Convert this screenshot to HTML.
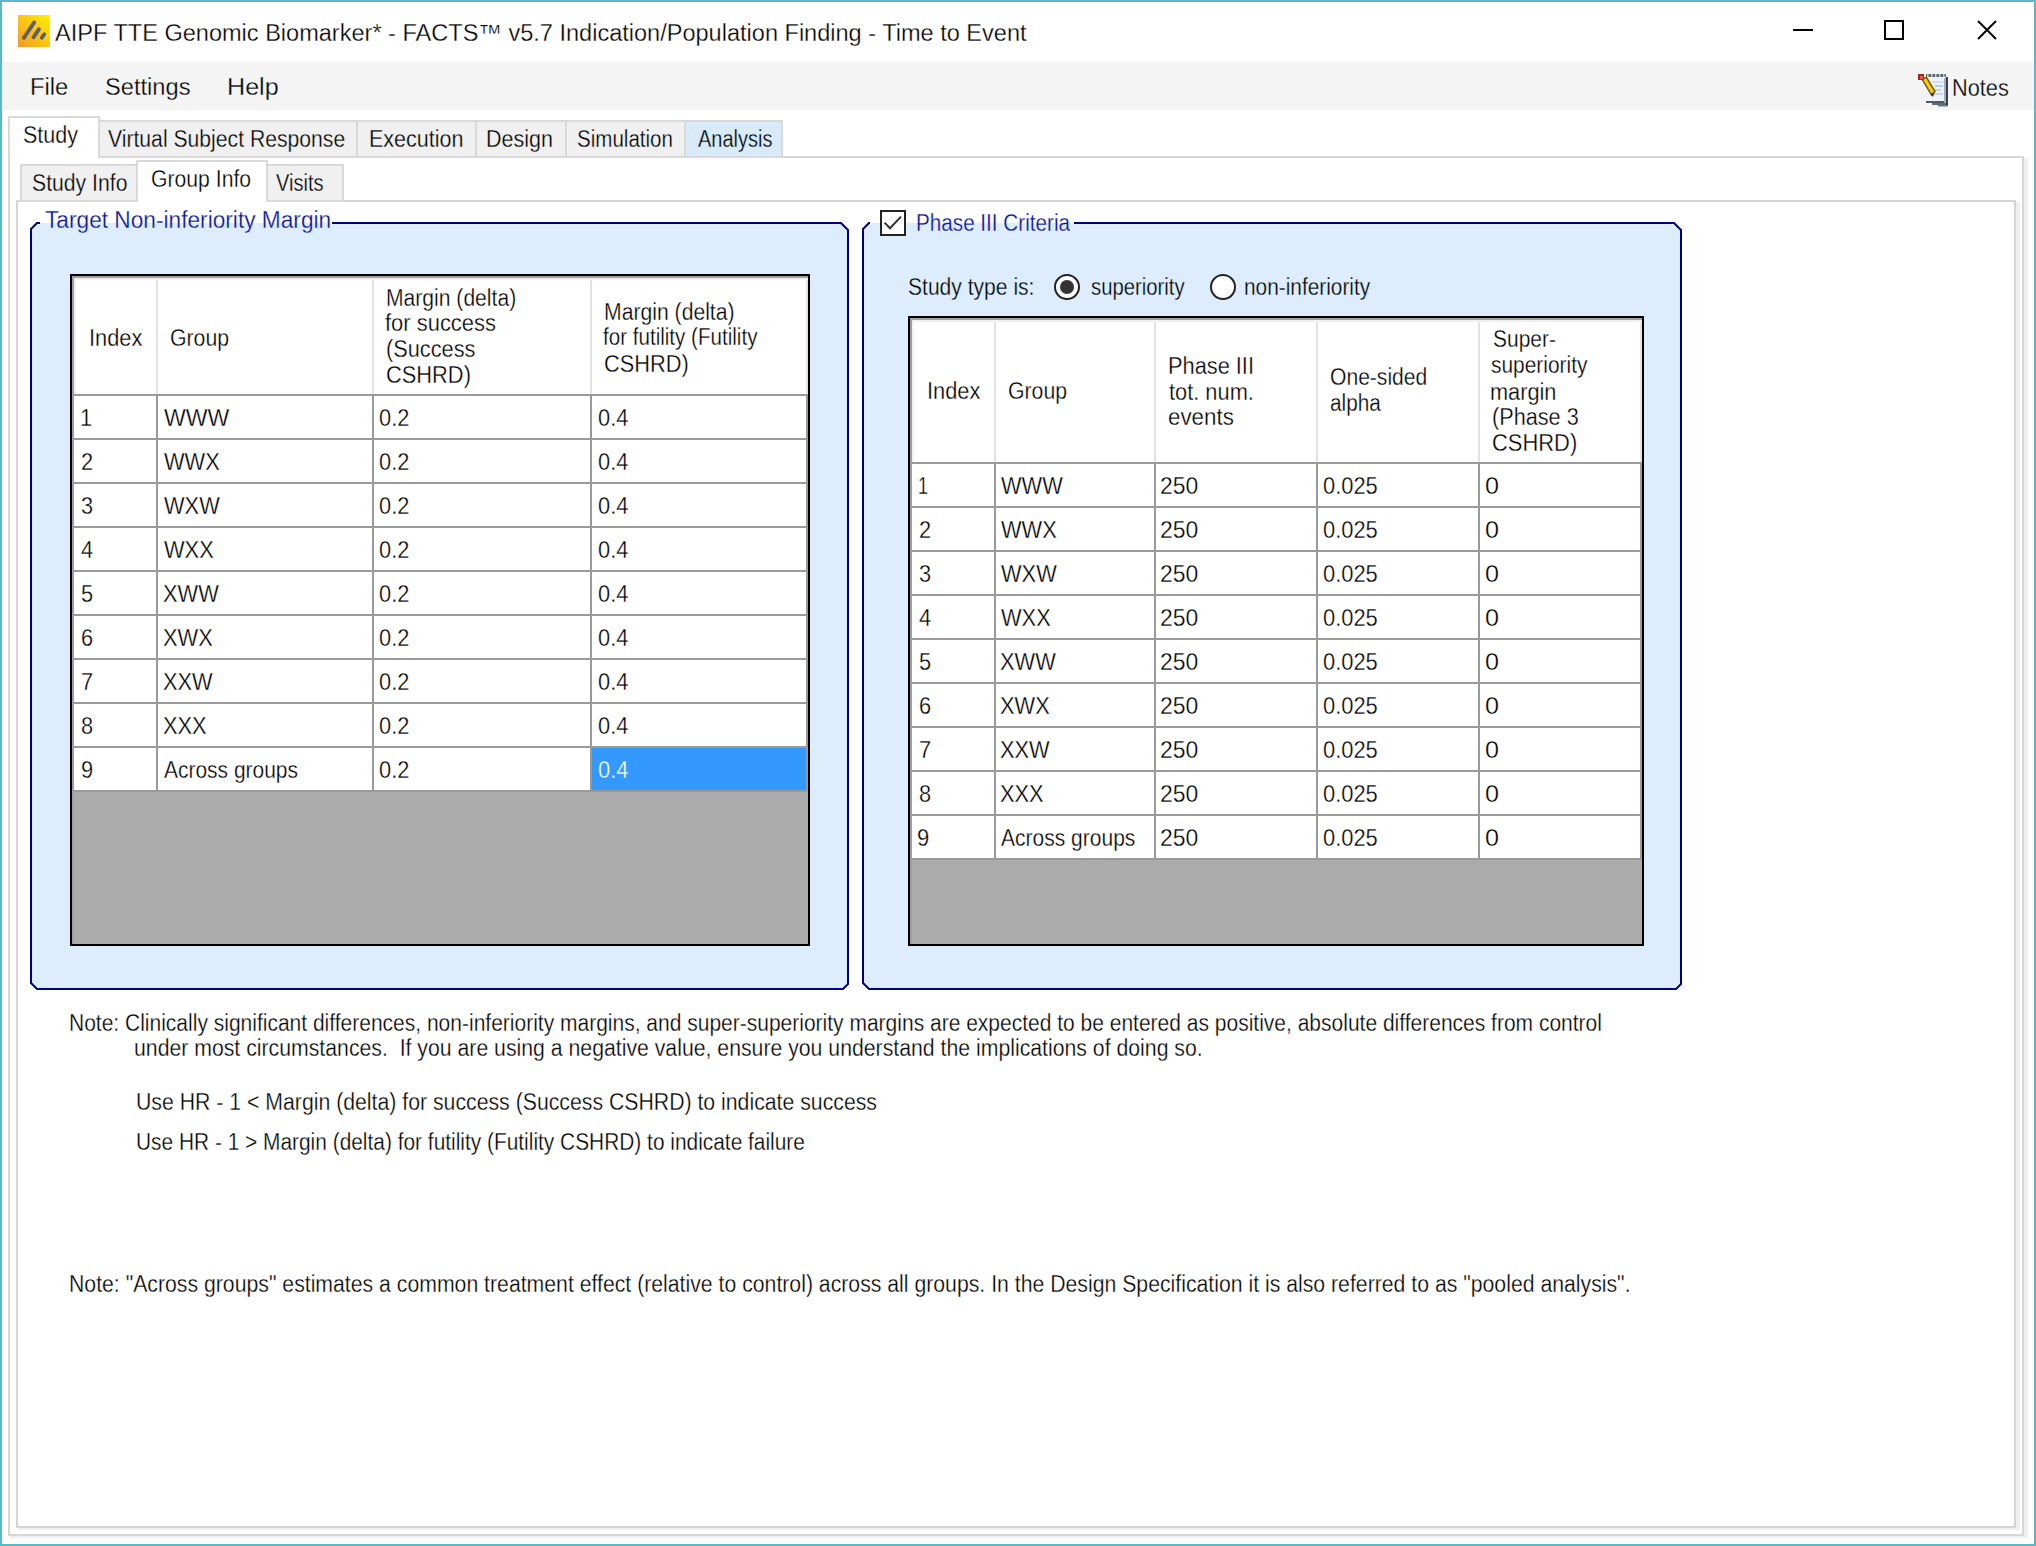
<!DOCTYPE html><html><head><meta charset="utf-8"><style>
html,body{margin:0;padding:0;}body{width:2036px;height:1546px;position:relative;overflow:hidden;background:#fff;font-family:"Liberation Sans",sans-serif;}
div{position:absolute;box-sizing:border-box;}
.t{height:0;white-space:pre;line-height:0;transform-origin:0 0;}
.t span{display:inline-block;line-height:0;}
</style></head><body>
<div style="left:0px;top:0px;width:2036px;height:2px;background:#5ab9c9;"></div>
<div style="left:0px;top:1544px;width:2036px;height:2px;background:#5ab9c9;"></div>
<div style="left:0px;top:0px;width:2px;height:1546px;background:#5ab9c9;"></div>
<div style="left:2034px;top:0px;width:2px;height:1546px;background:#5ab9c9;"></div>
<div style="left:18px;top:15px;width:32px;height:32px;background:linear-gradient(45deg,#f39a1e 0%,#fbc515 50%,#fff200 100%);"></div>
<svg style="position:absolute;left:18px;top:15px" width="32" height="32" viewBox="0 0 32 32"><g stroke="#5f5f5f" stroke-width="3.8" stroke-linecap="round" fill="none"><line x1="5.8" y1="23" x2="16.2" y2="7.4"/><line x1="15.4" y1="22.3" x2="21" y2="14.2"/><line x1="23.7" y1="22.8" x2="26.3" y2="19.2"/></g></svg>
<div class="t" style="left:55.00px;top:32.65px;font-size:23.5px;color:#000;-webkit-text-stroke:0.3px #fff;transform:scaleX(1.0016)"><span>AIPF TTE Genomic Biomarker* - FACTS™ v5.7 Indication/Population Finding - Time to Event</span></div>
<div style="left:1793px;top:29px;width:20px;height:2px;background:#000;"></div>
<div style="left:1884px;top:20px;width:20px;height:20px;border:2px solid #000;"></div>
<svg style="position:absolute;left:1975px;top:18px" width="24" height="24" viewBox="0 0 24 24"><path d="M3 3 L21 21 M21 3 L3 21" stroke="#000" stroke-width="2" fill="none"/></svg>
<div style="left:2px;top:62px;width:2032px;height:48px;background:#f4f4f4;"></div>
<div class="t" style="left:30.38px;top:87.45px;font-size:23.5px;color:#000;-webkit-text-stroke:0.3px #f4f4f4;transform:scaleX(1.0114)"><span>File</span></div>
<div class="t" style="left:104.99px;top:87.45px;font-size:23.5px;color:#000;-webkit-text-stroke:0.3px #f4f4f4;transform:scaleX(1.0072)"><span>Settings</span></div>
<div class="t" style="left:226.76px;top:87.45px;font-size:23.5px;color:#000;-webkit-text-stroke:0.3px #f4f4f4;transform:scaleX(1.0689)"><span>Help</span></div>
<svg style="position:absolute;left:1910px;top:68px" width="45" height="44" viewBox="0 0 45 44">
<rect x="16" y="8" width="20" height="27" fill="#eef3fa"/>
<rect x="22" y="13" width="12" height="2" fill="#d5e0ee"/>
<rect x="25" y="17" width="8" height="2" fill="#b9cbe0"/>
<rect x="23" y="21" width="8" height="2" fill="#c5d3e6"/>
<rect x="23" y="25" width="10" height="2" fill="#c5d3e6"/>
<rect x="16" y="6" width="20" height="3" fill="#5b6570"/>
<rect x="17" y="6" width="1.5" height="3" fill="#c8ccd0"/><rect x="21" y="6" width="1.5" height="3" fill="#c8ccd0"/><rect x="25" y="6" width="1.5" height="3" fill="#c8ccd0"/><rect x="29" y="6" width="1.5" height="3" fill="#c8ccd0"/><rect x="33" y="6" width="1.5" height="3" fill="#c8ccd0"/>
<rect x="34" y="10" width="2" height="26" fill="#a3adb7"/>
<rect x="36" y="9" width="2" height="29" fill="#34404b"/>
<rect x="16" y="33" width="18" height="2" fill="#4f5d6b"/>
<rect x="22" y="35" width="14" height="2" fill="#5d6a76"/>
<rect x="28" y="37" width="10" height="1.5" fill="#6b7682"/>
<path d="M12 11 L16.5 9.5 L25 23.5 L21.5 27 Z" fill="#f3cf10" stroke="#7a5a08" stroke-width="1.5"/>
<rect x="8" y="6" width="6" height="6" fill="#a8251c"/><rect x="10" y="8" width="3" height="3" fill="#f0584a"/>
<path d="M21 26 L24.5 24 L23 29 Z" fill="#2a2a2a"/>
</svg>
<div class="t" style="left:1952.15px;top:87.55px;font-size:23.5px;color:#000;-webkit-text-stroke:0.3px #f4f4f4;transform:scaleX(0.9254)"><span>Notes</span></div>
<div style="left:8px;top:156px;width:2016px;height:2px;background:#d6d6d6;"></div>
<div style="left:8px;top:156px;width:2px;height:1380px;background:#d6d6d6;"></div>
<div style="left:2022px;top:156px;width:2px;height:1380px;background:#d6d6d6;"></div>
<div style="left:2024px;top:158px;width:4px;height:1380px;background:#efefef;"></div>
<div style="left:8px;top:1534px;width:2016px;height:2px;background:#d6d6d6;"></div>
<div style="left:10px;top:1536px;width:2018px;height:2px;background:#efefef;"></div>
<div style="left:98px;top:120px;width:260px;height:38px;background:#f0f0f0;border:2px solid #d9d9d9;"></div>
<div style="left:356px;top:120px;width:121px;height:38px;background:#f0f0f0;border:2px solid #d9d9d9;"></div>
<div style="left:475px;top:120px;width:92px;height:38px;background:#f0f0f0;border:2px solid #d9d9d9;"></div>
<div style="left:565px;top:120px;width:121px;height:38px;background:#f0f0f0;border:2px solid #d9d9d9;"></div>
<div style="left:684px;top:120px;width:99px;height:38px;background:#d9eaf9;border:2px solid #d9d9d9;"></div>
<div style="left:8px;top:116px;width:92px;height:42px;background:#fff;border:2px solid #d9d9d9;border-bottom:none;"></div>
<div class="t" style="left:23.08px;top:135.05px;font-size:23.5px;color:#000;-webkit-text-stroke:0.3px #fff;transform:scaleX(0.9153)"><span>Study</span></div>
<div class="t" style="left:108.00px;top:139.05px;font-size:23.5px;color:#000;-webkit-text-stroke:0.3px #f0f0f0;transform:scaleX(0.9004)"><span>Virtual Subject Response</span></div>
<div class="t" style="left:368.57px;top:139.05px;font-size:23.5px;color:#000;-webkit-text-stroke:0.3px #f0f0f0;transform:scaleX(0.9160)"><span>Execution</span></div>
<div class="t" style="left:486.17px;top:139.05px;font-size:23.5px;color:#000;-webkit-text-stroke:0.3px #f0f0f0;transform:scaleX(0.9143)"><span>Design</span></div>
<div class="t" style="left:577.13px;top:139.05px;font-size:23.5px;color:#000;-webkit-text-stroke:0.3px #f0f0f0;transform:scaleX(0.8748)"><span>Simulation</span></div>
<div class="t" style="left:698.00px;top:139.05px;font-size:23.5px;color:#000;-webkit-text-stroke:0.3px #d9eaf9;transform:scaleX(0.8506)"><span>Analysis</span></div>
<div style="left:16px;top:200px;width:2000px;height:2px;background:#d6d6d6;"></div>
<div style="left:16px;top:200px;width:2px;height:1328px;background:#d6d6d6;"></div>
<div style="left:2014px;top:200px;width:2px;height:1328px;background:#d6d6d6;"></div>
<div style="left:2016px;top:202px;width:4px;height:1328px;background:#efefef;"></div>
<div style="left:16px;top:1526px;width:2000px;height:2px;background:#d6d6d6;"></div>
<div style="left:18px;top:1528px;width:2002px;height:2px;background:#efefef;"></div>
<div style="left:20px;top:164px;width:118px;height:38px;background:#f0f0f0;border:2px solid #d9d9d9;"></div>
<div style="left:266px;top:164px;width:78px;height:38px;background:#f0f0f0;border:2px solid #d9d9d9;"></div>
<div style="left:136px;top:160px;width:132px;height:42px;background:#fff;border:2px solid #d9d9d9;border-bottom:none;"></div>
<div class="t" style="left:31.50px;top:183.25px;font-size:23.5px;color:#000;-webkit-text-stroke:0.3px #f0f0f0;transform:scaleX(0.9019)"><span>Study Info</span></div>
<div class="t" style="left:151.10px;top:179.15px;font-size:23.5px;color:#000;-webkit-text-stroke:0.3px #fff;transform:scaleX(0.9018)"><span>Group Info</span></div>
<div class="t" style="left:275.70px;top:183.05px;font-size:23.5px;color:#000;-webkit-text-stroke:0.3px #f0f0f0;transform:scaleX(0.8527)"><span>Visits</span></div>
<svg style="position:absolute;left:30px;top:222px" width="819" height="768" viewBox="0 0 819 768"><path d="M1,7 L7,1 L811,1 L818,8 L818,762 L813,767 L7,767 L1,761 Z" fill="#deedfd" stroke="#000080" stroke-width="2"/></svg>
<div style="left:40px;top:222px;width:292px;height:2px;background:linear-gradient(#fff 0 1px,#deedfd 1px);"></div>
<svg style="position:absolute;left:862px;top:222px" width="820" height="768" viewBox="0 0 820 768"><path d="M1,7 L7,1 L812,1 L819,8 L819,762 L814,767 L7,767 L1,761 Z" fill="#deedfd" stroke="#000080" stroke-width="2"/></svg>
<div style="left:870px;top:222px;width:204px;height:2px;background:linear-gradient(#fff 0 1px,#deedfd 1px);"></div>
<div class="t" style="left:45.23px;top:219.85px;font-size:23.5px;color:#0e0e96;-webkit-text-stroke:0.3px #deedfd;transform:scaleX(0.9653)"><span>Target Non-inferiority Margin</span></div>
<div style="left:880px;top:210px;width:26px;height:26px;background:#fff;border:2px solid #222;"></div>
<svg style="position:absolute;left:880px;top:210px" width="26" height="26" viewBox="0 0 26 26"><path d="M4.5 12.6 L10 18.3 L21 6.6" stroke="#333" stroke-width="2" fill="none"/></svg>
<div class="t" style="left:916.04px;top:223.25px;font-size:23.5px;color:#0e0e96;-webkit-text-stroke:0.3px #deedfd;transform:scaleX(0.8798)"><span>Phase III Criteria</span></div>
<div class="t" style="left:908.10px;top:286.85px;font-size:23.5px;color:#000;-webkit-text-stroke:0.3px #deedfd;transform:scaleX(0.8964)"><span>Study type is:</span></div>
<div style="left:1054px;top:274px;width:26px;height:26px;border-radius:50%;background:#fff;border:2px solid #222;"></div>
<div style="left:1060px;top:280px;width:14px;height:14px;border-radius:50%;background:#333;"></div>
<div class="t" style="left:1090.74px;top:286.85px;font-size:23.5px;color:#000;-webkit-text-stroke:0.3px #deedfd;transform:scaleX(0.8636)"><span>superiority</span></div>
<div style="left:1210px;top:274px;width:26px;height:26px;border-radius:50%;background:#fff;border:2px solid #222;"></div>
<div class="t" style="left:1244.13px;top:286.85px;font-size:23.5px;color:#000;-webkit-text-stroke:0.3px #deedfd;transform:scaleX(0.8864)"><span>non-inferiority</span></div>
<div style="left:70px;top:274px;width:740px;height:672px;background:#000;"></div>
<div style="left:72px;top:276px;width:736px;height:668px;background:#a0a0a0;"></div>
<div style="left:74px;top:278px;width:734px;height:666px;background:#f0f0f0;"></div>
<div style="left:72px;top:276px;width:736px;height:668px;background:#ababab;"></div>
<div style="left:72px;top:276px;width:736px;height:2px;background:#a0a0a0;"></div>
<div style="left:72px;top:276px;width:2px;height:668px;background:#a0a0a0;"></div>
<div style="left:74px;top:278px;width:734px;height:116px;background:#fff;"></div>
<div style="left:74px;top:278px;width:734px;height:2px;background:#f0f0f0;"></div>
<div style="left:74px;top:278px;width:2px;height:116px;background:#f0f0f0;"></div>
<div style="left:156px;top:280px;width:2px;height:114px;background:#e2e2e2;"></div>
<div style="left:372px;top:280px;width:2px;height:114px;background:#e2e2e2;"></div>
<div style="left:590px;top:280px;width:2px;height:114px;background:#e2e2e2;"></div>
<div style="left:806px;top:280px;width:2px;height:114px;background:#e2e2e2;"></div>
<div style="left:74px;top:394px;width:734px;height:2px;background:#9a9a9a;"></div>
<div style="left:74px;top:396px;width:734px;height:396px;background:#fff;"></div>
<div style="left:74px;top:438px;width:734px;height:2px;background:#9a9a9a;"></div>
<div style="left:74px;top:482px;width:734px;height:2px;background:#9a9a9a;"></div>
<div style="left:74px;top:526px;width:734px;height:2px;background:#9a9a9a;"></div>
<div style="left:74px;top:570px;width:734px;height:2px;background:#9a9a9a;"></div>
<div style="left:74px;top:614px;width:734px;height:2px;background:#9a9a9a;"></div>
<div style="left:74px;top:658px;width:734px;height:2px;background:#9a9a9a;"></div>
<div style="left:74px;top:702px;width:734px;height:2px;background:#9a9a9a;"></div>
<div style="left:74px;top:746px;width:734px;height:2px;background:#9a9a9a;"></div>
<div style="left:74px;top:790px;width:734px;height:2px;background:#9a9a9a;"></div>
<div style="left:156px;top:394px;width:2px;height:398px;background:#9a9a9a;"></div>
<div style="left:372px;top:394px;width:2px;height:398px;background:#9a9a9a;"></div>
<div style="left:590px;top:394px;width:2px;height:398px;background:#9a9a9a;"></div>
<div style="left:806px;top:394px;width:2px;height:398px;background:#9a9a9a;"></div>
<div style="left:592px;top:748px;width:214px;height:42px;background:#3399ff;"></div>
<div class="t" style="left:88.65px;top:337.75px;font-size:23.5px;color:#000;-webkit-text-stroke:0.3px #fff;transform:scaleX(0.9273)"><span>Index</span></div>
<div class="t" style="left:170.10px;top:337.75px;font-size:23.5px;color:#000;-webkit-text-stroke:0.3px #fff;transform:scaleX(0.9048)"><span>Group</span></div>
<div class="t" style="left:386.10px;top:297.75px;font-size:23.5px;color:#000;-webkit-text-stroke:0.3px #fff;transform:scaleX(0.8979)"><span>Margin (delta)</span></div>
<div class="t" style="left:385.20px;top:323.45px;font-size:23.5px;color:#000;-webkit-text-stroke:0.3px #fff;transform:scaleX(0.9339)"><span>for success</span></div>
<div class="t" style="left:386.05px;top:349.45px;font-size:23.5px;color:#000;-webkit-text-stroke:0.3px #fff;transform:scaleX(0.9255)"><span>(Success</span></div>
<div class="t" style="left:385.87px;top:375.35px;font-size:23.5px;color:#000;-webkit-text-stroke:0.3px #fff;transform:scaleX(0.9292)"><span>CSHRD)</span></div>
<div class="t" style="left:604.10px;top:311.65px;font-size:23.5px;color:#000;-webkit-text-stroke:0.3px #fff;transform:scaleX(0.9007)"><span>Margin (delta)</span></div>
<div class="t" style="left:603.30px;top:337.35px;font-size:23.5px;color:#000;-webkit-text-stroke:0.3px #fff;transform:scaleX(0.8761)"><span>for futility (Futility</span></div>
<div class="t" style="left:604.37px;top:363.65px;font-size:23.5px;color:#000;-webkit-text-stroke:0.3px #fff;transform:scaleX(0.9281)"><span>CSHRD)</span></div>
<div class="t" style="left:79.74px;top:417.75px;font-size:23.5px;color:#000;-webkit-text-stroke:0.3px #fff;transform:scaleX(0.9281)"><span>1</span></div>
<div class="t" style="left:164.10px;top:417.75px;font-size:23.5px;color:#000;-webkit-text-stroke:0.3px #fff;transform:scaleX(0.9833)"><span>WWW</span></div>
<div class="t" style="left:379.07px;top:417.75px;font-size:23.5px;color:#000;-webkit-text-stroke:0.3px #fff;transform:scaleX(0.9281)"><span>0.2</span></div>
<div class="t" style="left:597.67px;top:417.75px;font-size:23.5px;color:#000;-webkit-text-stroke:0.3px #fff;transform:scaleX(0.9281)"><span>0.4</span></div>
<div class="t" style="left:80.67px;top:461.75px;font-size:23.5px;color:#000;-webkit-text-stroke:0.3px #fff;transform:scaleX(0.9281)"><span>2</span></div>
<div class="t" style="left:164.10px;top:461.75px;font-size:23.5px;color:#000;-webkit-text-stroke:0.3px #fff;transform:scaleX(0.9281)"><span>WWX</span></div>
<div class="t" style="left:379.07px;top:461.75px;font-size:23.5px;color:#000;-webkit-text-stroke:0.3px #fff;transform:scaleX(0.9281)"><span>0.2</span></div>
<div class="t" style="left:597.67px;top:461.75px;font-size:23.5px;color:#000;-webkit-text-stroke:0.3px #fff;transform:scaleX(0.9281)"><span>0.4</span></div>
<div class="t" style="left:80.67px;top:505.75px;font-size:23.5px;color:#000;-webkit-text-stroke:0.3px #fff;transform:scaleX(0.9281)"><span>3</span></div>
<div class="t" style="left:164.10px;top:505.75px;font-size:23.5px;color:#000;-webkit-text-stroke:0.3px #fff;transform:scaleX(0.9281)"><span>WXW</span></div>
<div class="t" style="left:379.07px;top:505.75px;font-size:23.5px;color:#000;-webkit-text-stroke:0.3px #fff;transform:scaleX(0.9281)"><span>0.2</span></div>
<div class="t" style="left:597.67px;top:505.75px;font-size:23.5px;color:#000;-webkit-text-stroke:0.3px #fff;transform:scaleX(0.9281)"><span>0.4</span></div>
<div class="t" style="left:80.67px;top:549.75px;font-size:23.5px;color:#000;-webkit-text-stroke:0.3px #fff;transform:scaleX(0.9281)"><span>4</span></div>
<div class="t" style="left:164.10px;top:549.75px;font-size:23.5px;color:#000;-webkit-text-stroke:0.3px #fff;transform:scaleX(0.9281)"><span>WXX</span></div>
<div class="t" style="left:379.07px;top:549.75px;font-size:23.5px;color:#000;-webkit-text-stroke:0.3px #fff;transform:scaleX(0.9281)"><span>0.2</span></div>
<div class="t" style="left:597.67px;top:549.75px;font-size:23.5px;color:#000;-webkit-text-stroke:0.3px #fff;transform:scaleX(0.9281)"><span>0.4</span></div>
<div class="t" style="left:80.67px;top:593.75px;font-size:23.5px;color:#000;-webkit-text-stroke:0.3px #fff;transform:scaleX(0.9281)"><span>5</span></div>
<div class="t" style="left:163.17px;top:593.75px;font-size:23.5px;color:#000;-webkit-text-stroke:0.3px #fff;transform:scaleX(0.9281)"><span>XWW</span></div>
<div class="t" style="left:379.07px;top:593.75px;font-size:23.5px;color:#000;-webkit-text-stroke:0.3px #fff;transform:scaleX(0.9281)"><span>0.2</span></div>
<div class="t" style="left:597.67px;top:593.75px;font-size:23.5px;color:#000;-webkit-text-stroke:0.3px #fff;transform:scaleX(0.9281)"><span>0.4</span></div>
<div class="t" style="left:80.67px;top:637.75px;font-size:23.5px;color:#000;-webkit-text-stroke:0.3px #fff;transform:scaleX(0.9281)"><span>6</span></div>
<div class="t" style="left:163.17px;top:637.75px;font-size:23.5px;color:#000;-webkit-text-stroke:0.3px #fff;transform:scaleX(0.9281)"><span>XWX</span></div>
<div class="t" style="left:379.07px;top:637.75px;font-size:23.5px;color:#000;-webkit-text-stroke:0.3px #fff;transform:scaleX(0.9281)"><span>0.2</span></div>
<div class="t" style="left:597.67px;top:637.75px;font-size:23.5px;color:#000;-webkit-text-stroke:0.3px #fff;transform:scaleX(0.9281)"><span>0.4</span></div>
<div class="t" style="left:80.67px;top:681.75px;font-size:23.5px;color:#000;-webkit-text-stroke:0.3px #fff;transform:scaleX(0.9281)"><span>7</span></div>
<div class="t" style="left:163.17px;top:681.75px;font-size:23.5px;color:#000;-webkit-text-stroke:0.3px #fff;transform:scaleX(0.9281)"><span>XXW</span></div>
<div class="t" style="left:379.07px;top:681.75px;font-size:23.5px;color:#000;-webkit-text-stroke:0.3px #fff;transform:scaleX(0.9281)"><span>0.2</span></div>
<div class="t" style="left:597.67px;top:681.75px;font-size:23.5px;color:#000;-webkit-text-stroke:0.3px #fff;transform:scaleX(0.9281)"><span>0.4</span></div>
<div class="t" style="left:80.67px;top:725.75px;font-size:23.5px;color:#000;-webkit-text-stroke:0.3px #fff;transform:scaleX(0.9281)"><span>8</span></div>
<div class="t" style="left:163.17px;top:725.75px;font-size:23.5px;color:#000;-webkit-text-stroke:0.3px #fff;transform:scaleX(0.9281)"><span>XXX</span></div>
<div class="t" style="left:379.07px;top:725.75px;font-size:23.5px;color:#000;-webkit-text-stroke:0.3px #fff;transform:scaleX(0.9281)"><span>0.2</span></div>
<div class="t" style="left:597.67px;top:725.75px;font-size:23.5px;color:#000;-webkit-text-stroke:0.3px #fff;transform:scaleX(0.9281)"><span>0.4</span></div>
<div class="t" style="left:80.67px;top:769.75px;font-size:23.5px;color:#000;-webkit-text-stroke:0.3px #fff;transform:scaleX(0.9281)"><span>9</span></div>
<div class="t" style="left:164.10px;top:769.75px;font-size:23.5px;color:#000;-webkit-text-stroke:0.3px #fff;transform:scaleX(0.8919)"><span>Across groups</span></div>
<div class="t" style="left:379.07px;top:769.75px;font-size:23.5px;color:#000;-webkit-text-stroke:0.3px #fff;transform:scaleX(0.9281)"><span>0.2</span></div>
<div class="t" style="left:597.67px;top:769.75px;font-size:23.5px;color:#fff;-webkit-text-stroke:0.3px #3399ff;transform:scaleX(0.9281)"><span>0.4</span></div>
<div style="left:908px;top:316px;width:736px;height:630px;background:#000;"></div>
<div style="left:910px;top:318px;width:732px;height:626px;background:#a0a0a0;"></div>
<div style="left:912px;top:320px;width:730px;height:624px;background:#f0f0f0;"></div>
<div style="left:910px;top:318px;width:732px;height:626px;background:#ababab;"></div>
<div style="left:910px;top:318px;width:732px;height:2px;background:#a0a0a0;"></div>
<div style="left:910px;top:318px;width:2px;height:626px;background:#a0a0a0;"></div>
<div style="left:912px;top:320px;width:730px;height:142px;background:#fff;"></div>
<div style="left:912px;top:320px;width:730px;height:2px;background:#f0f0f0;"></div>
<div style="left:912px;top:320px;width:2px;height:142px;background:#f0f0f0;"></div>
<div style="left:994px;top:322px;width:2px;height:140px;background:#e2e2e2;"></div>
<div style="left:1154px;top:322px;width:2px;height:140px;background:#e2e2e2;"></div>
<div style="left:1316px;top:322px;width:2px;height:140px;background:#e2e2e2;"></div>
<div style="left:1478px;top:322px;width:2px;height:140px;background:#e2e2e2;"></div>
<div style="left:1640px;top:322px;width:2px;height:140px;background:#e2e2e2;"></div>
<div style="left:912px;top:462px;width:730px;height:2px;background:#9a9a9a;"></div>
<div style="left:912px;top:464px;width:730px;height:396px;background:#fff;"></div>
<div style="left:912px;top:506px;width:730px;height:2px;background:#9a9a9a;"></div>
<div style="left:912px;top:550px;width:730px;height:2px;background:#9a9a9a;"></div>
<div style="left:912px;top:594px;width:730px;height:2px;background:#9a9a9a;"></div>
<div style="left:912px;top:638px;width:730px;height:2px;background:#9a9a9a;"></div>
<div style="left:912px;top:682px;width:730px;height:2px;background:#9a9a9a;"></div>
<div style="left:912px;top:726px;width:730px;height:2px;background:#9a9a9a;"></div>
<div style="left:912px;top:770px;width:730px;height:2px;background:#9a9a9a;"></div>
<div style="left:912px;top:814px;width:730px;height:2px;background:#9a9a9a;"></div>
<div style="left:912px;top:858px;width:730px;height:2px;background:#9a9a9a;"></div>
<div style="left:994px;top:462px;width:2px;height:398px;background:#9a9a9a;"></div>
<div style="left:1154px;top:462px;width:2px;height:398px;background:#9a9a9a;"></div>
<div style="left:1316px;top:462px;width:2px;height:398px;background:#9a9a9a;"></div>
<div style="left:1478px;top:462px;width:2px;height:398px;background:#9a9a9a;"></div>
<div style="left:1640px;top:462px;width:2px;height:398px;background:#9a9a9a;"></div>
<div class="t" style="left:926.74px;top:391.25px;font-size:23.5px;color:#000;-webkit-text-stroke:0.3px #fff;transform:scaleX(0.9291)"><span>Index</span></div>
<div class="t" style="left:1008.20px;top:391.25px;font-size:23.5px;color:#000;-webkit-text-stroke:0.3px #fff;transform:scaleX(0.9048)"><span>Group</span></div>
<div class="t" style="left:1168.35px;top:365.55px;font-size:23.5px;color:#000;-webkit-text-stroke:0.3px #fff;transform:scaleX(0.9270)"><span>Phase III</span></div>
<div class="t" style="left:1168.60px;top:391.55px;font-size:23.5px;color:#000;-webkit-text-stroke:0.3px #fff;transform:scaleX(0.9281)"><span>tot. num.</span></div>
<div class="t" style="left:1168.45px;top:416.65px;font-size:23.5px;color:#000;-webkit-text-stroke:0.3px #fff;transform:scaleX(0.9507)"><span>events</span></div>
<div class="t" style="left:1329.60px;top:377.35px;font-size:23.5px;color:#000;-webkit-text-stroke:0.3px #fff;transform:scaleX(0.8972)"><span>One-sided</span></div>
<div class="t" style="left:1330.42px;top:402.95px;font-size:23.5px;color:#000;-webkit-text-stroke:0.3px #fff;transform:scaleX(0.8825)"><span>alpha</span></div>
<div class="t" style="left:1493.11px;top:339.35px;font-size:23.5px;color:#000;-webkit-text-stroke:0.3px #fff;transform:scaleX(0.8928)"><span>Super-</span></div>
<div class="t" style="left:1491.41px;top:365.35px;font-size:23.5px;color:#000;-webkit-text-stroke:0.3px #fff;transform:scaleX(0.8897)"><span>superiority</span></div>
<div class="t" style="left:1490.45px;top:391.55px;font-size:23.5px;color:#000;-webkit-text-stroke:0.3px #fff;transform:scaleX(0.9250)"><span>margin</span></div>
<div class="t" style="left:1492.16px;top:417.25px;font-size:23.5px;color:#000;-webkit-text-stroke:0.3px #fff;transform:scaleX(0.9220)"><span>(Phase 3</span></div>
<div class="t" style="left:1491.77px;top:443.05px;font-size:23.5px;color:#000;-webkit-text-stroke:0.3px #fff;transform:scaleX(0.9326)"><span>CSHRD)</span></div>
<div class="t" style="left:918.46px;top:485.75px;font-size:23.5px;color:#000;-webkit-text-stroke:0.3px #fff;transform:scaleX(0.7700)"><span>1</span></div>
<div class="t" style="left:1001.40px;top:485.75px;font-size:23.5px;color:#000;-webkit-text-stroke:0.3px #fff;transform:scaleX(0.9281)"><span>WWW</span></div>
<div class="t" style="left:1160.22px;top:485.75px;font-size:23.5px;color:#000;-webkit-text-stroke:0.3px #fff;transform:scaleX(0.9757)"><span>250</span></div>
<div class="t" style="left:1323.07px;top:485.75px;font-size:23.5px;color:#000;-webkit-text-stroke:0.3px #fff;transform:scaleX(0.9316)"><span>0.025</span></div>
<div class="t" style="left:1485.13px;top:485.75px;font-size:23.5px;color:#000;-webkit-text-stroke:0.3px #fff;transform:scaleX(1.0727)"><span>0</span></div>
<div class="t" style="left:919.07px;top:529.75px;font-size:23.5px;color:#000;-webkit-text-stroke:0.3px #fff;transform:scaleX(0.9281)"><span>2</span></div>
<div class="t" style="left:1001.40px;top:529.75px;font-size:23.5px;color:#000;-webkit-text-stroke:0.3px #fff;transform:scaleX(0.9281)"><span>WWX</span></div>
<div class="t" style="left:1160.22px;top:529.75px;font-size:23.5px;color:#000;-webkit-text-stroke:0.3px #fff;transform:scaleX(0.9757)"><span>250</span></div>
<div class="t" style="left:1323.07px;top:529.75px;font-size:23.5px;color:#000;-webkit-text-stroke:0.3px #fff;transform:scaleX(0.9316)"><span>0.025</span></div>
<div class="t" style="left:1485.13px;top:529.75px;font-size:23.5px;color:#000;-webkit-text-stroke:0.3px #fff;transform:scaleX(1.0727)"><span>0</span></div>
<div class="t" style="left:919.07px;top:573.75px;font-size:23.5px;color:#000;-webkit-text-stroke:0.3px #fff;transform:scaleX(0.9281)"><span>3</span></div>
<div class="t" style="left:1001.40px;top:573.75px;font-size:23.5px;color:#000;-webkit-text-stroke:0.3px #fff;transform:scaleX(0.9281)"><span>WXW</span></div>
<div class="t" style="left:1160.22px;top:573.75px;font-size:23.5px;color:#000;-webkit-text-stroke:0.3px #fff;transform:scaleX(0.9757)"><span>250</span></div>
<div class="t" style="left:1323.07px;top:573.75px;font-size:23.5px;color:#000;-webkit-text-stroke:0.3px #fff;transform:scaleX(0.9316)"><span>0.025</span></div>
<div class="t" style="left:1485.13px;top:573.75px;font-size:23.5px;color:#000;-webkit-text-stroke:0.3px #fff;transform:scaleX(1.0727)"><span>0</span></div>
<div class="t" style="left:919.07px;top:617.75px;font-size:23.5px;color:#000;-webkit-text-stroke:0.3px #fff;transform:scaleX(0.9281)"><span>4</span></div>
<div class="t" style="left:1001.40px;top:617.75px;font-size:23.5px;color:#000;-webkit-text-stroke:0.3px #fff;transform:scaleX(0.9281)"><span>WXX</span></div>
<div class="t" style="left:1160.22px;top:617.75px;font-size:23.5px;color:#000;-webkit-text-stroke:0.3px #fff;transform:scaleX(0.9757)"><span>250</span></div>
<div class="t" style="left:1323.07px;top:617.75px;font-size:23.5px;color:#000;-webkit-text-stroke:0.3px #fff;transform:scaleX(0.9316)"><span>0.025</span></div>
<div class="t" style="left:1485.13px;top:617.75px;font-size:23.5px;color:#000;-webkit-text-stroke:0.3px #fff;transform:scaleX(1.0727)"><span>0</span></div>
<div class="t" style="left:919.07px;top:661.75px;font-size:23.5px;color:#000;-webkit-text-stroke:0.3px #fff;transform:scaleX(0.9281)"><span>5</span></div>
<div class="t" style="left:1000.47px;top:661.75px;font-size:23.5px;color:#000;-webkit-text-stroke:0.3px #fff;transform:scaleX(0.9281)"><span>XWW</span></div>
<div class="t" style="left:1160.22px;top:661.75px;font-size:23.5px;color:#000;-webkit-text-stroke:0.3px #fff;transform:scaleX(0.9757)"><span>250</span></div>
<div class="t" style="left:1323.07px;top:661.75px;font-size:23.5px;color:#000;-webkit-text-stroke:0.3px #fff;transform:scaleX(0.9316)"><span>0.025</span></div>
<div class="t" style="left:1485.13px;top:661.75px;font-size:23.5px;color:#000;-webkit-text-stroke:0.3px #fff;transform:scaleX(1.0727)"><span>0</span></div>
<div class="t" style="left:919.07px;top:705.75px;font-size:23.5px;color:#000;-webkit-text-stroke:0.3px #fff;transform:scaleX(0.9281)"><span>6</span></div>
<div class="t" style="left:1000.47px;top:705.75px;font-size:23.5px;color:#000;-webkit-text-stroke:0.3px #fff;transform:scaleX(0.9281)"><span>XWX</span></div>
<div class="t" style="left:1160.22px;top:705.75px;font-size:23.5px;color:#000;-webkit-text-stroke:0.3px #fff;transform:scaleX(0.9757)"><span>250</span></div>
<div class="t" style="left:1323.07px;top:705.75px;font-size:23.5px;color:#000;-webkit-text-stroke:0.3px #fff;transform:scaleX(0.9316)"><span>0.025</span></div>
<div class="t" style="left:1485.13px;top:705.75px;font-size:23.5px;color:#000;-webkit-text-stroke:0.3px #fff;transform:scaleX(1.0727)"><span>0</span></div>
<div class="t" style="left:919.07px;top:749.75px;font-size:23.5px;color:#000;-webkit-text-stroke:0.3px #fff;transform:scaleX(0.9281)"><span>7</span></div>
<div class="t" style="left:1000.47px;top:749.75px;font-size:23.5px;color:#000;-webkit-text-stroke:0.3px #fff;transform:scaleX(0.9281)"><span>XXW</span></div>
<div class="t" style="left:1160.22px;top:749.75px;font-size:23.5px;color:#000;-webkit-text-stroke:0.3px #fff;transform:scaleX(0.9757)"><span>250</span></div>
<div class="t" style="left:1323.07px;top:749.75px;font-size:23.5px;color:#000;-webkit-text-stroke:0.3px #fff;transform:scaleX(0.9316)"><span>0.025</span></div>
<div class="t" style="left:1485.13px;top:749.75px;font-size:23.5px;color:#000;-webkit-text-stroke:0.3px #fff;transform:scaleX(1.0727)"><span>0</span></div>
<div class="t" style="left:919.07px;top:793.75px;font-size:23.5px;color:#000;-webkit-text-stroke:0.3px #fff;transform:scaleX(0.9281)"><span>8</span></div>
<div class="t" style="left:1000.47px;top:793.75px;font-size:23.5px;color:#000;-webkit-text-stroke:0.3px #fff;transform:scaleX(0.9281)"><span>XXX</span></div>
<div class="t" style="left:1160.22px;top:793.75px;font-size:23.5px;color:#000;-webkit-text-stroke:0.3px #fff;transform:scaleX(0.9757)"><span>250</span></div>
<div class="t" style="left:1323.07px;top:793.75px;font-size:23.5px;color:#000;-webkit-text-stroke:0.3px #fff;transform:scaleX(0.9316)"><span>0.025</span></div>
<div class="t" style="left:1485.13px;top:793.75px;font-size:23.5px;color:#000;-webkit-text-stroke:0.3px #fff;transform:scaleX(1.0727)"><span>0</span></div>
<div class="t" style="left:917.16px;top:837.75px;font-size:23.5px;color:#000;-webkit-text-stroke:0.3px #fff;transform:scaleX(0.9364)"><span>9</span></div>
<div class="t" style="left:1001.40px;top:837.75px;font-size:23.5px;color:#000;-webkit-text-stroke:0.3px #fff;transform:scaleX(0.8946)"><span>Across groups</span></div>
<div class="t" style="left:1160.22px;top:837.75px;font-size:23.5px;color:#000;-webkit-text-stroke:0.3px #fff;transform:scaleX(0.9757)"><span>250</span></div>
<div class="t" style="left:1323.07px;top:837.75px;font-size:23.5px;color:#000;-webkit-text-stroke:0.3px #fff;transform:scaleX(0.9316)"><span>0.025</span></div>
<div class="t" style="left:1485.13px;top:837.75px;font-size:23.5px;color:#000;-webkit-text-stroke:0.3px #fff;transform:scaleX(1.0727)"><span>0</span></div>
<div class="t" style="left:68.81px;top:1022.85px;font-size:23.5px;color:#000;-webkit-text-stroke:0.3px #fff;transform:scaleX(0.8936)"><span>Note: Clinically significant differences, non-inferiority margins, and super-superiority margins are expected to be entered as positive, absolute differences from control</span></div>
<div class="t" style="left:133.69px;top:1048.45px;font-size:23.5px;color:#000;-webkit-text-stroke:0.3px #fff;transform:scaleX(0.9040)"><span>under most circumstances.  If you are using a negative value, ensure you understand the implications of doing so.</span></div>
<div class="t" style="left:135.79px;top:1101.75px;font-size:23.5px;color:#000;-webkit-text-stroke:0.3px #fff;transform:scaleX(0.9042)"><span>Use HR - 1 &lt; Margin (delta) for success (Success CSHRD) to indicate success</span></div>
<div class="t" style="left:135.82px;top:1141.55px;font-size:23.5px;color:#000;-webkit-text-stroke:0.3px #fff;transform:scaleX(0.8885)"><span>Use HR - 1 &gt; Margin (delta) for futility (Futility CSHRD) to indicate failure</span></div>
<div class="t" style="left:68.99px;top:1283.65px;font-size:23.5px;color:#000;-webkit-text-stroke:0.3px #fff;transform:scaleX(0.9035)"><span>Note: "Across groups" estimates a common treatment effect (relative to control) across all groups. In the Design Specification it is also referred to as "pooled analysis".</span></div>
</body></html>
